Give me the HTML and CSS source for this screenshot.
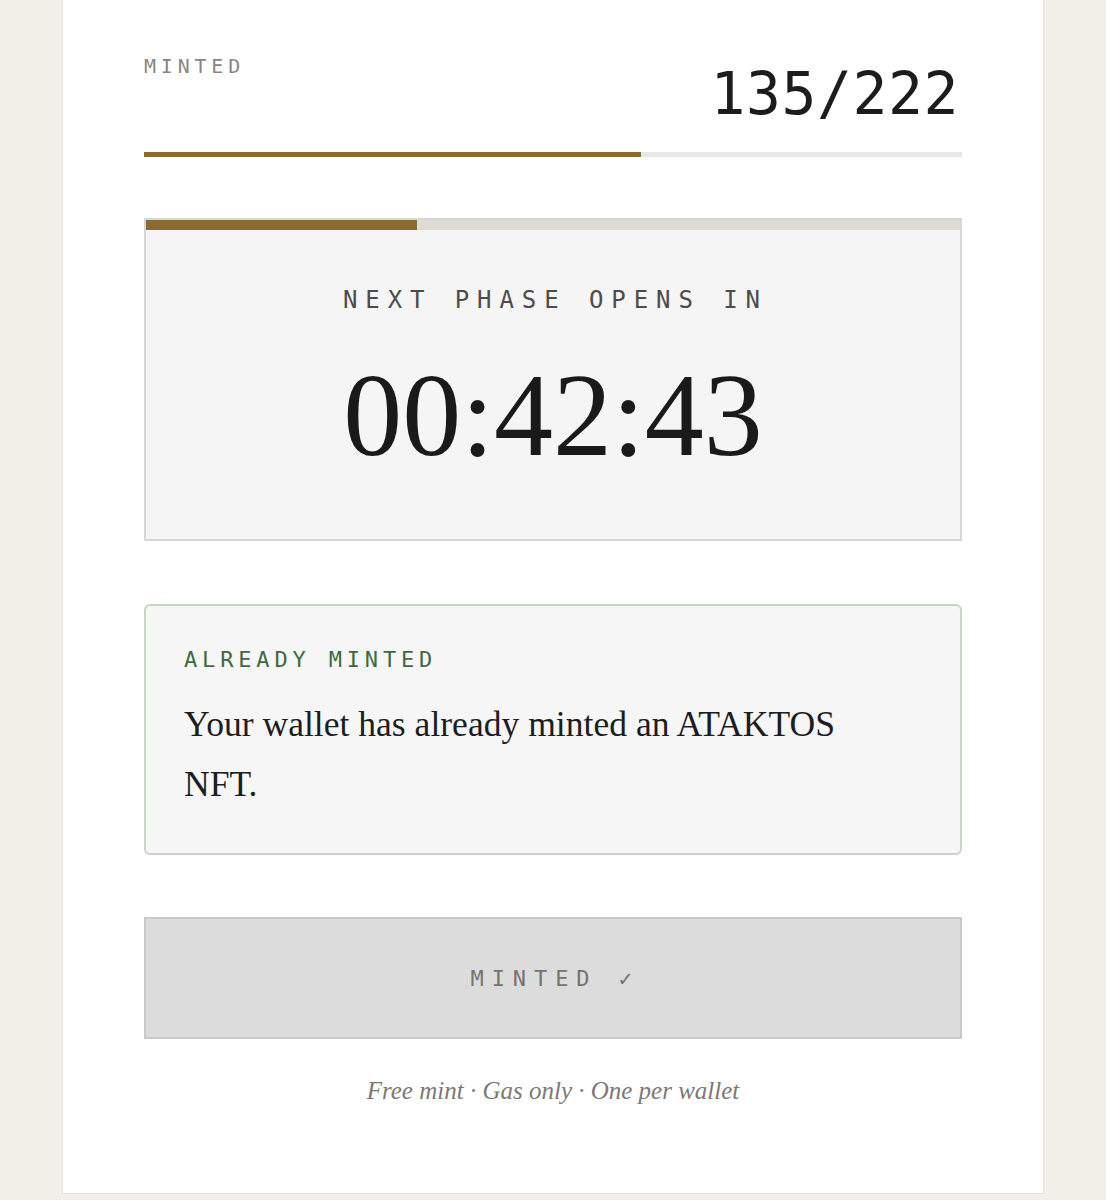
FILE: index.html
```html
<!DOCTYPE html>
<html lang="en">
<head>
<meta charset="utf-8">
<title>ATAKTOS Mint</title>
<link rel="stylesheet" href="styles.css">
</head>
<body>
<main class="panel">
  <div class="supply-head">
    <span class="supply-label">MINTED</span>
    <span class="supply-count">135/222</span>
  </div>
  <div class="supply-track"><div class="supply-fill" style="width: 60.81%"></div></div>

  <section class="phase-card">
    <div class="phase-track"><div class="phase-fill" style="width: 33.3%"></div></div>
    <div class="phase-body">
      <div class="phase-label">NEXT PHASE OPENS IN</div>
      <div class="phase-time">00:42:43</div>
    </div>
  </section>

  <section class="notice">
    <div class="notice-label">ALREADY MINTED</div>
    <p class="notice-text">Your wallet has already minted an ATAKTOS NFT.</p>
  </section>

  <button class="mint-btn" disabled>MINTED ✓</button>

  <p class="footnote">Free mint · Gas only · One per wallet</p>
</main>
</body>
</html>
```
FILE: styles.css
```css
html, body {
  margin: 0;
  padding: 0;
  background: #f2eee8;
}

.panel {
  box-sizing: content-box;
  width: 818px;
  margin-left: 62px;
  padding: 56px 81px 89px 81px;
  background: #ffffff;
  border: 1px solid #e6e3de;
  border-top: none;
  display: flex;
  flex-direction: column;
}

.supply-head {
  display: flex;
  justify-content: space-between;
  align-items: flex-start;
}

.supply-label {
  font-family: "DejaVu Sans Mono", "Liberation Mono", monospace;
  font-size: 20px;
  line-height: 20px;
  letter-spacing: 0.24em;
  color: #8a8585;
}

.supply-count {
  margin-top: 9px;
  font-family: "DejaVu Sans Mono", "Liberation Mono", monospace;
  font-size: 58px;
  line-height: 58px;
  color: #1c1c1c;
  margin-right: 3px;
  letter-spacing: 0.01em;
}

.supply-track {
  margin-top: 29px;
  height: 5px;
  background: #e8e8e8;
}

.supply-fill {
  height: 100%;
  background: #8a6a35;
}

.phase-card {
  margin-top: 61px;
  border: 2px solid #d6d6d6;
  background: #f5f5f5;
}

.phase-track {
  height: 10px;
  background: #dfdbd3;
}

.phase-fill {
  height: 100%;
  background: #8a6a35;
}

.phase-body {
  padding: 58px 0 64px;
  display: flex;
  flex-direction: column;
  align-items: center;
}

.phase-label {
  font-family: "DejaVu Sans Mono", "Liberation Mono", monospace;
  font-size: 24px;
  line-height: 24px;
  letter-spacing: 0.33em;
  color: #4e4b4b;
  padding-left: 0.2em;
}

.phase-time {
  margin-top: 45px;
  font-family: "Liberation Serif", "Times New Roman", serif;
  font-size: 118px;
  line-height: 118px;
  color: #1a1a1a;
}

.notice {
  margin-top: 63px;
  border: 2px solid #c8d4c6;
  border-radius: 6px;
  background: #f6f6f6;
  padding: 43px 38px 39px;
}

.notice-label {
  font-family: "DejaVu Sans Mono", "Liberation Mono", monospace;
  font-size: 22px;
  line-height: 22px;
  letter-spacing: 0.22em;
  color: #3e6a3e;
}

.notice-text {
  margin: 23px 0 0;
  max-width: 690px;
  font-family: "Liberation Serif", "Times New Roman", serif;
  font-size: 35.6px;
  line-height: 60px;
  color: #1d1d1d;
}

.mint-btn {
  margin-top: 62px;
  height: 122px;
  border: 2px solid #c9c9c9;
  border-radius: 0;
  background: #dcdcdc;
  display: flex;
  align-items: center;
  justify-content: center;
  padding: 0 0 0 0.2em;
  font-family: "DejaVu Sans Mono", "Liberation Mono", monospace;
  font-size: 22px;
  letter-spacing: 0.36em;
  color: #787171;
}

.footnote {
  margin: 39px 0 0;
  text-align: center;
  font-family: "Liberation Serif", "Times New Roman", serif;
  font-style: italic;
  font-size: 25px;
  line-height: 26px;
  color: #7d7878;
}
```
